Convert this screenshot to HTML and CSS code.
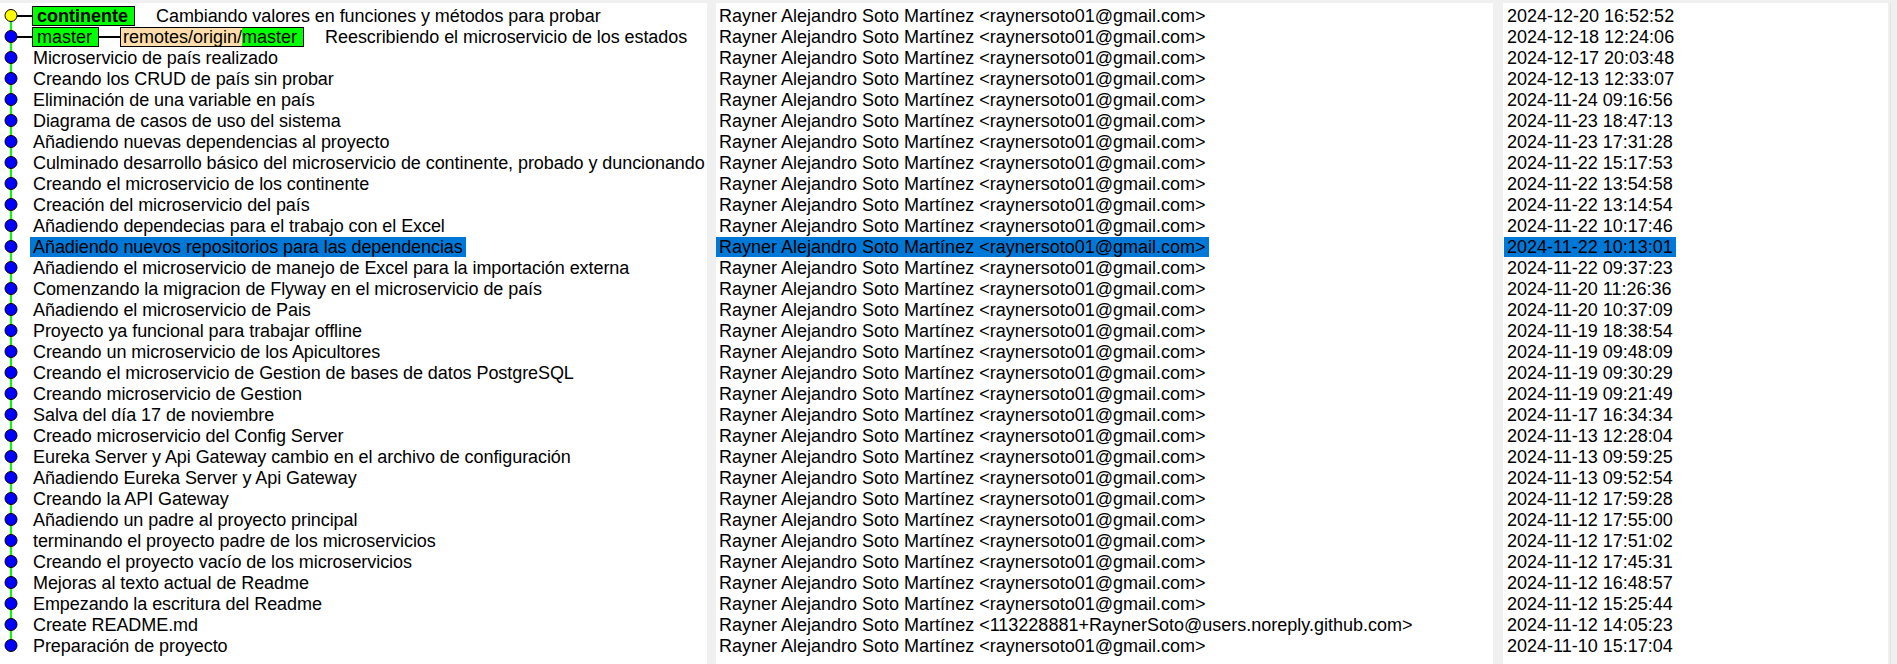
FILE: index.html
```html
<!DOCTYPE html>
<html>
<head>
<meta charset="utf-8">
<link rel="stylesheet" href="styles.css">
</head>
<body>
<div class="pane graph-pane">
  <div class="row">
    <svg class="g" width="32" height="21"><rect class="ln" x="10" y="10" width="2" height="11"/><rect class="cn" x="17" y="10" width="15" height="2"/><circle class="dot head" cx="11" cy="10.5" r="6"/></svg>
    <span class="ref"><b>continente</b></span>
    <span class="t after-ref">Cambiando valores en funciones y métodos para probar</span>
  </div>
  <div class="row">
    <svg class="g" width="32" height="21"><rect class="ln" x="10" y="0" width="2" height="21"/><rect class="cn" x="17" y="10" width="15" height="2"/><circle class="dot" cx="11" cy="10.5" r="6"/></svg>
    <span class="ref">master</span><span class="link"></span><span class="ref remote"><span class="rp">remotes/origin/</span><span class="rb">master</span></span>
    <span class="t after-ref">Reescribiendo el microservicio de los estados</span>
  </div>
  <div class="row"><svg class="g" width="30" height="21"><rect class="ln" x="10" y="0" width="2" height="21"/><circle class="dot" cx="11" cy="10.5" r="6"/></svg><span class="t">Microservicio de país realizado</span></div>
  <div class="row"><svg class="g" width="30" height="21"><rect class="ln" x="10" y="0" width="2" height="21"/><circle class="dot" cx="11" cy="10.5" r="6"/></svg><span class="t">Creando los CRUD de país sin probar</span></div>
  <div class="row"><svg class="g" width="30" height="21"><rect class="ln" x="10" y="0" width="2" height="21"/><circle class="dot" cx="11" cy="10.5" r="6"/></svg><span class="t">Eliminación de una variable en país</span></div>
  <div class="row"><svg class="g" width="30" height="21"><rect class="ln" x="10" y="0" width="2" height="21"/><circle class="dot" cx="11" cy="10.5" r="6"/></svg><span class="t">Diagrama de casos de uso del sistema</span></div>
  <div class="row"><svg class="g" width="30" height="21"><rect class="ln" x="10" y="0" width="2" height="21"/><circle class="dot" cx="11" cy="10.5" r="6"/></svg><span class="t">Añadiendo nuevas dependencias al proyecto</span></div>
  <div class="row"><svg class="g" width="30" height="21"><rect class="ln" x="10" y="0" width="2" height="21"/><circle class="dot" cx="11" cy="10.5" r="6"/></svg><span class="t">Culminado desarrollo básico del microservicio de continente, probado y duncionando</span></div>
  <div class="row"><svg class="g" width="30" height="21"><rect class="ln" x="10" y="0" width="2" height="21"/><circle class="dot" cx="11" cy="10.5" r="6"/></svg><span class="t">Creando el microservicio de los continente</span></div>
  <div class="row"><svg class="g" width="30" height="21"><rect class="ln" x="10" y="0" width="2" height="21"/><circle class="dot" cx="11" cy="10.5" r="6"/></svg><span class="t">Creación del microservicio del país</span></div>
  <div class="row"><svg class="g" width="30" height="21"><rect class="ln" x="10" y="0" width="2" height="21"/><circle class="dot" cx="11" cy="10.5" r="6"/></svg><span class="t">Añadiendo dependecias para el trabajo con el Excel</span></div>
  <div class="row"><svg class="g" width="30" height="21"><rect class="ln" x="10" y="0" width="2" height="21"/><circle class="dot" cx="11" cy="10.5" r="6"/></svg><span class="t sel">Añadiendo nuevos repositorios para las dependencias</span></div>
  <div class="row"><svg class="g" width="30" height="21"><rect class="ln" x="10" y="0" width="2" height="21"/><circle class="dot" cx="11" cy="10.5" r="6"/></svg><span class="t">Añadiendo el microservicio de manejo de Excel para la importación externa</span></div>
  <div class="row"><svg class="g" width="30" height="21"><rect class="ln" x="10" y="0" width="2" height="21"/><circle class="dot" cx="11" cy="10.5" r="6"/></svg><span class="t">Comenzando la migracion de Flyway en el microservicio de país</span></div>
  <div class="row"><svg class="g" width="30" height="21"><rect class="ln" x="10" y="0" width="2" height="21"/><circle class="dot" cx="11" cy="10.5" r="6"/></svg><span class="t">Añadiendo el microservicio de Pais</span></div>
  <div class="row"><svg class="g" width="30" height="21"><rect class="ln" x="10" y="0" width="2" height="21"/><circle class="dot" cx="11" cy="10.5" r="6"/></svg><span class="t">Proyecto ya funcional para trabajar offline</span></div>
  <div class="row"><svg class="g" width="30" height="21"><rect class="ln" x="10" y="0" width="2" height="21"/><circle class="dot" cx="11" cy="10.5" r="6"/></svg><span class="t">Creando un microservicio de los Apicultores</span></div>
  <div class="row"><svg class="g" width="30" height="21"><rect class="ln" x="10" y="0" width="2" height="21"/><circle class="dot" cx="11" cy="10.5" r="6"/></svg><span class="t">Creando el microservicio de Gestion de bases de datos PostgreSQL</span></div>
  <div class="row"><svg class="g" width="30" height="21"><rect class="ln" x="10" y="0" width="2" height="21"/><circle class="dot" cx="11" cy="10.5" r="6"/></svg><span class="t">Creando microservicio de Gestion</span></div>
  <div class="row"><svg class="g" width="30" height="21"><rect class="ln" x="10" y="0" width="2" height="21"/><circle class="dot" cx="11" cy="10.5" r="6"/></svg><span class="t">Salva del día 17 de noviembre</span></div>
  <div class="row"><svg class="g" width="30" height="21"><rect class="ln" x="10" y="0" width="2" height="21"/><circle class="dot" cx="11" cy="10.5" r="6"/></svg><span class="t">Creado microservicio del Config Server</span></div>
  <div class="row"><svg class="g" width="30" height="21"><rect class="ln" x="10" y="0" width="2" height="21"/><circle class="dot" cx="11" cy="10.5" r="6"/></svg><span class="t">Eureka Server y Api Gateway cambio en el archivo de configuración</span></div>
  <div class="row"><svg class="g" width="30" height="21"><rect class="ln" x="10" y="0" width="2" height="21"/><circle class="dot" cx="11" cy="10.5" r="6"/></svg><span class="t">Añadiendo Eureka Server y Api Gateway</span></div>
  <div class="row"><svg class="g" width="30" height="21"><rect class="ln" x="10" y="0" width="2" height="21"/><circle class="dot" cx="11" cy="10.5" r="6"/></svg><span class="t">Creando la API Gateway</span></div>
  <div class="row"><svg class="g" width="30" height="21"><rect class="ln" x="10" y="0" width="2" height="21"/><circle class="dot" cx="11" cy="10.5" r="6"/></svg><span class="t">Añadiendo un padre al proyecto principal</span></div>
  <div class="row"><svg class="g" width="30" height="21"><rect class="ln" x="10" y="0" width="2" height="21"/><circle class="dot" cx="11" cy="10.5" r="6"/></svg><span class="t">terminando el proyecto padre de los microservicios</span></div>
  <div class="row"><svg class="g" width="30" height="21"><rect class="ln" x="10" y="0" width="2" height="21"/><circle class="dot" cx="11" cy="10.5" r="6"/></svg><span class="t">Creando el proyecto vacío de los microservicios</span></div>
  <div class="row"><svg class="g" width="30" height="21"><rect class="ln" x="10" y="0" width="2" height="21"/><circle class="dot" cx="11" cy="10.5" r="6"/></svg><span class="t">Mejoras al texto actual de Readme</span></div>
  <div class="row"><svg class="g" width="30" height="21"><rect class="ln" x="10" y="0" width="2" height="21"/><circle class="dot" cx="11" cy="10.5" r="6"/></svg><span class="t">Empezando la escritura del Readme</span></div>
  <div class="row"><svg class="g" width="30" height="21"><rect class="ln" x="10" y="0" width="2" height="21"/><circle class="dot" cx="11" cy="10.5" r="6"/></svg><span class="t">Create README.md</span></div>
  <div class="row"><svg class="g" width="30" height="21"><rect class="ln" x="10" y="0" width="2" height="11"/><circle class="dot" cx="11" cy="10.5" r="6"/></svg><span class="t">Preparación de proyecto</span></div>
</div>

<div class="pane author-pane">
  <div class="row"><span class="t">Rayner Alejandro Soto Martínez &lt;raynersoto01@gmail.com&gt;</span></div>
  <div class="row"><span class="t">Rayner Alejandro Soto Martínez &lt;raynersoto01@gmail.com&gt;</span></div>
  <div class="row"><span class="t">Rayner Alejandro Soto Martínez &lt;raynersoto01@gmail.com&gt;</span></div>
  <div class="row"><span class="t">Rayner Alejandro Soto Martínez &lt;raynersoto01@gmail.com&gt;</span></div>
  <div class="row"><span class="t">Rayner Alejandro Soto Martínez &lt;raynersoto01@gmail.com&gt;</span></div>
  <div class="row"><span class="t">Rayner Alejandro Soto Martínez &lt;raynersoto01@gmail.com&gt;</span></div>
  <div class="row"><span class="t">Rayner Alejandro Soto Martínez &lt;raynersoto01@gmail.com&gt;</span></div>
  <div class="row"><span class="t">Rayner Alejandro Soto Martínez &lt;raynersoto01@gmail.com&gt;</span></div>
  <div class="row"><span class="t">Rayner Alejandro Soto Martínez &lt;raynersoto01@gmail.com&gt;</span></div>
  <div class="row"><span class="t">Rayner Alejandro Soto Martínez &lt;raynersoto01@gmail.com&gt;</span></div>
  <div class="row"><span class="t">Rayner Alejandro Soto Martínez &lt;raynersoto01@gmail.com&gt;</span></div>
  <div class="row"><span class="t sel">Rayner Alejandro Soto Martínez &lt;raynersoto01@gmail.com&gt;</span></div>
  <div class="row"><span class="t">Rayner Alejandro Soto Martínez &lt;raynersoto01@gmail.com&gt;</span></div>
  <div class="row"><span class="t">Rayner Alejandro Soto Martínez &lt;raynersoto01@gmail.com&gt;</span></div>
  <div class="row"><span class="t">Rayner Alejandro Soto Martínez &lt;raynersoto01@gmail.com&gt;</span></div>
  <div class="row"><span class="t">Rayner Alejandro Soto Martínez &lt;raynersoto01@gmail.com&gt;</span></div>
  <div class="row"><span class="t">Rayner Alejandro Soto Martínez &lt;raynersoto01@gmail.com&gt;</span></div>
  <div class="row"><span class="t">Rayner Alejandro Soto Martínez &lt;raynersoto01@gmail.com&gt;</span></div>
  <div class="row"><span class="t">Rayner Alejandro Soto Martínez &lt;raynersoto01@gmail.com&gt;</span></div>
  <div class="row"><span class="t">Rayner Alejandro Soto Martínez &lt;raynersoto01@gmail.com&gt;</span></div>
  <div class="row"><span class="t">Rayner Alejandro Soto Martínez &lt;raynersoto01@gmail.com&gt;</span></div>
  <div class="row"><span class="t">Rayner Alejandro Soto Martínez &lt;raynersoto01@gmail.com&gt;</span></div>
  <div class="row"><span class="t">Rayner Alejandro Soto Martínez &lt;raynersoto01@gmail.com&gt;</span></div>
  <div class="row"><span class="t">Rayner Alejandro Soto Martínez &lt;raynersoto01@gmail.com&gt;</span></div>
  <div class="row"><span class="t">Rayner Alejandro Soto Martínez &lt;raynersoto01@gmail.com&gt;</span></div>
  <div class="row"><span class="t">Rayner Alejandro Soto Martínez &lt;raynersoto01@gmail.com&gt;</span></div>
  <div class="row"><span class="t">Rayner Alejandro Soto Martínez &lt;raynersoto01@gmail.com&gt;</span></div>
  <div class="row"><span class="t">Rayner Alejandro Soto Martínez &lt;raynersoto01@gmail.com&gt;</span></div>
  <div class="row"><span class="t">Rayner Alejandro Soto Martínez &lt;raynersoto01@gmail.com&gt;</span></div>
  <div class="row"><span class="t">Rayner Alejandro Soto Martínez &lt;113228881+RaynerSoto@users.noreply.github.com&gt;</span></div>
  <div class="row"><span class="t">Rayner Alejandro Soto Martínez &lt;raynersoto01@gmail.com&gt;</span></div>
</div>

<div class="pane date-pane">
  <div class="row"><span class="t">2024-12-20 16:52:52</span></div>
  <div class="row"><span class="t">2024-12-18 12:24:06</span></div>
  <div class="row"><span class="t">2024-12-17 20:03:48</span></div>
  <div class="row"><span class="t">2024-12-13 12:33:07</span></div>
  <div class="row"><span class="t">2024-11-24 09:16:56</span></div>
  <div class="row"><span class="t">2024-11-23 18:47:13</span></div>
  <div class="row"><span class="t">2024-11-23 17:31:28</span></div>
  <div class="row"><span class="t">2024-11-22 15:17:53</span></div>
  <div class="row"><span class="t">2024-11-22 13:54:58</span></div>
  <div class="row"><span class="t">2024-11-22 13:14:54</span></div>
  <div class="row"><span class="t">2024-11-22 10:17:46</span></div>
  <div class="row"><span class="t sel">2024-11-22 10:13:01</span></div>
  <div class="row"><span class="t">2024-11-22 09:37:23</span></div>
  <div class="row"><span class="t">2024-11-20 11:26:36</span></div>
  <div class="row"><span class="t">2024-11-20 10:37:09</span></div>
  <div class="row"><span class="t">2024-11-19 18:38:54</span></div>
  <div class="row"><span class="t">2024-11-19 09:48:09</span></div>
  <div class="row"><span class="t">2024-11-19 09:30:29</span></div>
  <div class="row"><span class="t">2024-11-19 09:21:49</span></div>
  <div class="row"><span class="t">2024-11-17 16:34:34</span></div>
  <div class="row"><span class="t">2024-11-13 12:28:04</span></div>
  <div class="row"><span class="t">2024-11-13 09:59:25</span></div>
  <div class="row"><span class="t">2024-11-13 09:52:54</span></div>
  <div class="row"><span class="t">2024-11-12 17:59:28</span></div>
  <div class="row"><span class="t">2024-11-12 17:55:00</span></div>
  <div class="row"><span class="t">2024-11-12 17:51:02</span></div>
  <div class="row"><span class="t">2024-11-12 17:45:31</span></div>
  <div class="row"><span class="t">2024-11-12 16:48:57</span></div>
  <div class="row"><span class="t">2024-11-12 15:25:44</span></div>
  <div class="row"><span class="t">2024-11-12 14:05:23</span></div>
  <div class="row"><span class="t">2024-11-10 15:17:04</span></div>
</div>
<div class="sash"></div>
</body>
</html>
```

FILE: styles.css
```css
html, body {
  margin: 0;
  padding: 0;
  height: 100%;
}
body {
  background: #f0f0f0;
  display: flex;
  align-items: stretch;
  padding-top: 3px;
  box-sizing: border-box;
  height: 664px;
  overflow: hidden;
  font-family: "Liberation Sans", Arial, sans-serif;
  font-size: 18px;
  color: #000;
}
.pane {
  background: #fff;
  padding-top: 2px;
  overflow: hidden;
  box-sizing: border-box;
}
.graph-pane {
  width: 707px;
  letter-spacing: -0.07px;
}
.author-pane {
  width: 777px;
  margin-left: 9px;
}
.date-pane {
  width: 385px;
  margin-left: 10px;
  padding-left: 1px;
}
.sash {
  width: 1px;
  margin-left: 2px;
  background: #e2e2e2;
}
.row {
  height: 21px;
  display: flex;
  align-items: flex-start;
  white-space: nowrap;
}
.g {
  flex: none;
  display: block;
}
.ln { fill: #00ff00; }
.cn { fill: #000; }
.dot {
  fill: #0000ff;
  stroke: #000;
  stroke-width: 1;
}
.dot.head { fill: #ffff00; }
.t {
  display: inline-block;
  margin-top: 1px;
  height: 20px;
  line-height: 20px;
  padding: 0 3px;
}
.t.sel {
  background: #0078d7;
}
.after-ref {
  margin-left: 18px;
}
.ref {
  flex: none;
  display: inline-flex;
  box-sizing: border-box;
  margin-top: 1px;
  height: 20px;
  line-height: 18px;
  border: 1px solid #000;
  background: #00ff00;
  padding: 0 6px 0 4px;
  letter-spacing: 0;
}
.ref b { font-weight: bold; }
.link {
  flex: none;
  width: 21px;
  height: 2px;
  margin-top: 10px;
  background: #000;
}
.ref.remote {
  padding: 0;
  background: #ffddaa;
}
.rp {
  padding-left: 2px;
  background: #ffddaa;
}
.rb {
  padding-right: 6px;
  background: #00ff00;
}
```
